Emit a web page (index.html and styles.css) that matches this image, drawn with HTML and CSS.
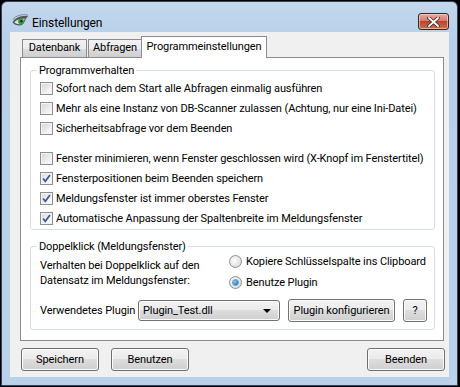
FILE: index.html
```html
<!DOCTYPE html>
<html lang="de">
<head>
  <meta charset="UTF-8" />
  <title>Einstellungen</title>
  <link rel="stylesheet" href="styles.css">
</head>
<body>
  <div class="window">
    <div class="titlebar">
      <svg class="app-icon" width="17" height="15" viewBox="0 0 17 15">
        <path d="M0.5 9.5 C3 4.5 9 2 16.5 3.5 C13 4 13.5 11.5 8.5 12.5 C5 13 2.5 11.5 0.5 9.5 Z" fill="#4f5a57"/>
        <path d="M2.2 9.3 C4.5 6.5 8.5 5.3 13.2 5.8 C11.5 6.8 11.8 10.6 8.5 11.2 C6 11.5 4 10.8 2.2 9.3 Z" fill="#d7e0dc"/>
        <circle cx="9" cy="8.3" r="2.9" fill="#3c9a3a"/>
        <circle cx="9.3" cy="8.3" r="1.2" fill="#12331a"/>
        <path d="M0.8 6.5 C4 2.5 10 0.8 16 2.2" stroke="#7d8884" stroke-width="1" fill="none"/>
      </svg>
      <span class="title">Einstellungen</span>
      <button class="close">
        <svg width="13" height="10" viewBox="0 0 13 10">
          <path d="M2 1 L11 9 M11 1 L2 9" stroke="#3c2a2a" stroke-width="3.4" stroke-linecap="square"/>
          <path d="M2 1 L11 9 M11 1 L2 9" stroke="#ffffff" stroke-width="1.8" stroke-linecap="square"/>
        </svg>
      </button>
    </div>

    <div class="client">
      <div class="tabs">
        <div class="tab-strip">
          <span class="tab tab-db">Datenbank</span>
          <span class="tab tab-abf">Abfragen</span>
          <span class="tab active">Programmeinstellungen</span>
        </div>

        <div class="tab-page">
          <fieldset class="group group-behaviour">
            <legend>Programmverhalten</legend>
            <label class="check"><span class="box"></span>Sofort nach dem Start alle Abfragen einmalig ausführen</label>
            <label class="check"><span class="box"></span>Mehr als eine Instanz von DB-Scanner zulassen (Achtung, nur eine Ini-Datei)</label>
            <label class="check"><span class="box"></span>Sicherheitsabfrage vor dem Beenden</label>
            <label class="check spaced"><span class="box"></span>Fenster minimieren, wenn Fenster geschlossen wird (X-Knopf im Fenstertitel)</label>
            <label class="check"><span class="box checked"><svg width="11" height="11" viewBox="0 0 11 11"><path d="M2 5.5 L4.3 8.3 L9 2" stroke="#3d5894" stroke-width="1.7" fill="none"/></svg></span>Fensterpositionen beim Beenden speichern</label>
            <label class="check"><span class="box checked"><svg width="11" height="11" viewBox="0 0 11 11"><path d="M2 5.5 L4.3 8.3 L9 2" stroke="#3d5894" stroke-width="1.7" fill="none"/></svg></span>Meldungsfenster ist immer oberstes Fenster</label>
            <label class="check"><span class="box checked"><svg width="11" height="11" viewBox="0 0 11 11"><path d="M2 5.5 L4.3 8.3 L9 2" stroke="#3d5894" stroke-width="1.7" fill="none"/></svg></span>Automatische Anpassung der Spaltenbreite im Meldungsfenster</label>
          </fieldset>

          <fieldset class="group group-dblclick">
            <legend>Doppelklick (Meldungsfenster)</legend>
            <div class="dbl-row">
              <p class="dbl-text">Verhalten bei Doppelklick auf den<br>Datensatz im Meldungsfenster:</p>
              <div class="radios">
                <label class="radio"><span class="dot"></span>Kopiere Schlüsselspalte ins Clipboard</label>
                <label class="radio"><span class="dot selected"></span>Benutze Plugin</label>
              </div>
            </div>
            <div class="plugin-row">
              <span class="plugin-label">Verwendetes Plugin</span>
              <div class="combo">
                <span>Plugin_Test.dll</span>
                <span class="arrow"></span>
              </div>
              <button class="btn btn-config">Plugin konfigurieren</button>
              <button class="btn btn-help">?</button>
            </div>
          </fieldset>
        </div>
      </div>

      <div class="actions">
        <button class="btn btn-main">Speichern</button>
        <button class="btn btn-main">Benutzen</button>
        <button class="btn btn-main btn-end">Beenden</button>
      </div>
    </div>
  </div>
</body>
</html>
```

FILE: styles.css
```css
body {
  margin: 0;
  background: #000;
  font-family: Roboto, "Liberation Sans", sans-serif;
  font-size: 11px;
  letter-spacing: -0.1px;
  color: #000;
}

.window {
  box-sizing: border-box;
  width: 457px;
  height: 385px;
  margin: 1px 0 0 1px;
  border: 1px solid #34455b;
  border-radius: 6px 6px 0 0;
  background: linear-gradient(#c3d7ed, #b7cfe9 40px, #b9d1ea);
  display: flex;
  flex-direction: column;
}

/* title bar */
.titlebar {
  height: 30px;
  display: flex;
  align-items: flex-start;
  padding-left: 10px;
}

.app-icon {
  margin-top: 11px;
}

.title {
  margin: 13px 0 0 3px;
  font-size: 12px;
  line-height: 16px;
  letter-spacing: -0.1px;
}

.close {
  box-sizing: border-box;
  width: 31px;
  height: 17px;
  margin: 11px 8px 0 auto;
  padding: 0;
  border: 1px solid #4b1b1b;
  border-radius: 3px;
  background: linear-gradient(#e9a99c, #d47d6e 45%, #c0432f 50%, #cf6a4f);
  box-shadow: inset 0 0 0 1px rgba(255, 220, 210, 0.6);
  display: flex;
  align-items: center;
  justify-content: center;
}

/* client area */
.client {
  flex: 1;
  margin: 0 8px 8px 8px;
  background: #f0f0f0;
  display: flex;
  flex-direction: column;
}

.tabs {
  margin: 4px 5px 0 10px;
}

.tab-strip {
  height: 21px;
  display: flex;
  align-items: flex-end;
  padding-left: 2px;
}

.tab {
  box-sizing: border-box;
  height: 18px;
  line-height: 16px;
  padding: 0;
  text-align: center;
  border: 1px solid #898c95;
  border-bottom: none;
  background: linear-gradient(#f2f2f2, #ebebeb 50%, #dddddd 50%, #cfcfcf);
}

.tab-db {
  width: 65px;
  margin-right: 1px;
}

.tab-abf {
  width: 54px;
}

.tab.active {
  position: relative;
  z-index: 1;
  width: 126px;
  height: 22px;
  line-height: 20px;
  margin: 0 0 -1px -1px;
  background: #fff;
}

.tab-page {
  box-sizing: border-box;
  height: 284px;
  border: 1px solid #898c95;
  background: #fff;
  padding: 5px 8px 0 9px;
}

/* group boxes */
.group {
  margin: 0;
  padding: 0 0 1px 9px;
  border: 1px solid #d5dfe5;
  border-radius: 3px;
}

.group legend {
  padding: 0 2px;
  margin-left: -3px;
  line-height: 15px;
}

.group-dblclick {
  margin-top: 9px;
  padding-bottom: 7px;
}

.check {
  display: flex;
  align-items: center;
  height: 20px;
  white-space: nowrap;
}

.check.spaced {
  margin-top: 10px;
}

.box {
  box-sizing: border-box;
  width: 13px;
  height: 13px;
  margin-right: 3px;
  border: 1px solid #8e8f8f;
  background: linear-gradient(135deg, #d4d4d4, #f2f2f2 70%, #fbfbfb);
  box-shadow: inset 0 0 0 1px #f4f4f4;
  display: flex;
  align-items: center;
  justify-content: center;
}

.box.checked {
  background: linear-gradient(135deg, #dcdcdc, #f5f5f5 70%, #fefefe);
}

.dbl-row {
  display: flex;
}

.dbl-text {
  margin: 4px 0 0 0;
  width: 189px;
  line-height: 15px;
}

.radios {
  display: flex;
  flex-direction: column;
  gap: 7px;
}

.radio {
  display: flex;
  align-items: center;
  height: 14px;
  white-space: nowrap;
}

.dot {
  box-sizing: border-box;
  width: 13px;
  height: 13px;
  margin-right: 4px;
  border: 1px solid #8e8f8f;
  border-radius: 50%;
  background: radial-gradient(circle at 40% 40%, #ffffff, #e4e4e4 60%, #cfcfcf);
  display: flex;
  align-items: center;
  justify-content: center;
}

.dot.selected::after {
  content: "";
  width: 5px;
  height: 5px;
  border-radius: 50%;
  background: radial-gradient(circle at 40% 40%, #8fd3f5, #2a7fc0 60%, #1d4f8a);
  box-shadow: 0 0 0 1px #7aa7d3;
}

.plugin-row {
  display: flex;
  align-items: center;
  margin-top: 10px;
}

.plugin-label {
  width: 98px;
  white-space: nowrap;
}

.combo {
  box-sizing: border-box;
  width: 142px;
  height: 21px;
  padding: 0 8px 0 4px;
  border: 1px solid #707070;
  border-radius: 3px;
  background: linear-gradient(#f2f2f2, #ebebeb 50%, #dddddd 50%, #cfcfcf);
  box-shadow: inset 0 0 0 1px #fbfbfb;
  display: flex;
  align-items: center;
  justify-content: space-between;
}

.arrow {
  width: 0;
  height: 0;
  border-left: 4px solid transparent;
  border-right: 4px solid transparent;
  border-top: 4px solid #000;
}

.btn {
  box-sizing: border-box;
  height: 23px;
  padding: 0;
  border: 1px solid #707070;
  border-radius: 3px;
  background: linear-gradient(#f2f2f2, #ebebeb 50%, #dddddd 50%, #cfcfcf);
  box-shadow: inset 0 0 0 1px #fcfcfc;
  font-family: inherit;
  font-size: 11px;
  letter-spacing: -0.1px;
  color: #000;
  white-space: nowrap;
}

.btn-config {
  width: 107px;
  margin-left: 8px;
}

.btn-help {
  width: 24px;
  margin-left: 8px;
}

.actions {
  display: flex;
  margin: 7px 4px 0 11px;
}

.btn-main {
  width: 78px;
  margin-right: 12px;
}

.btn-end {
  margin: 0 0 0 auto;
}
```
